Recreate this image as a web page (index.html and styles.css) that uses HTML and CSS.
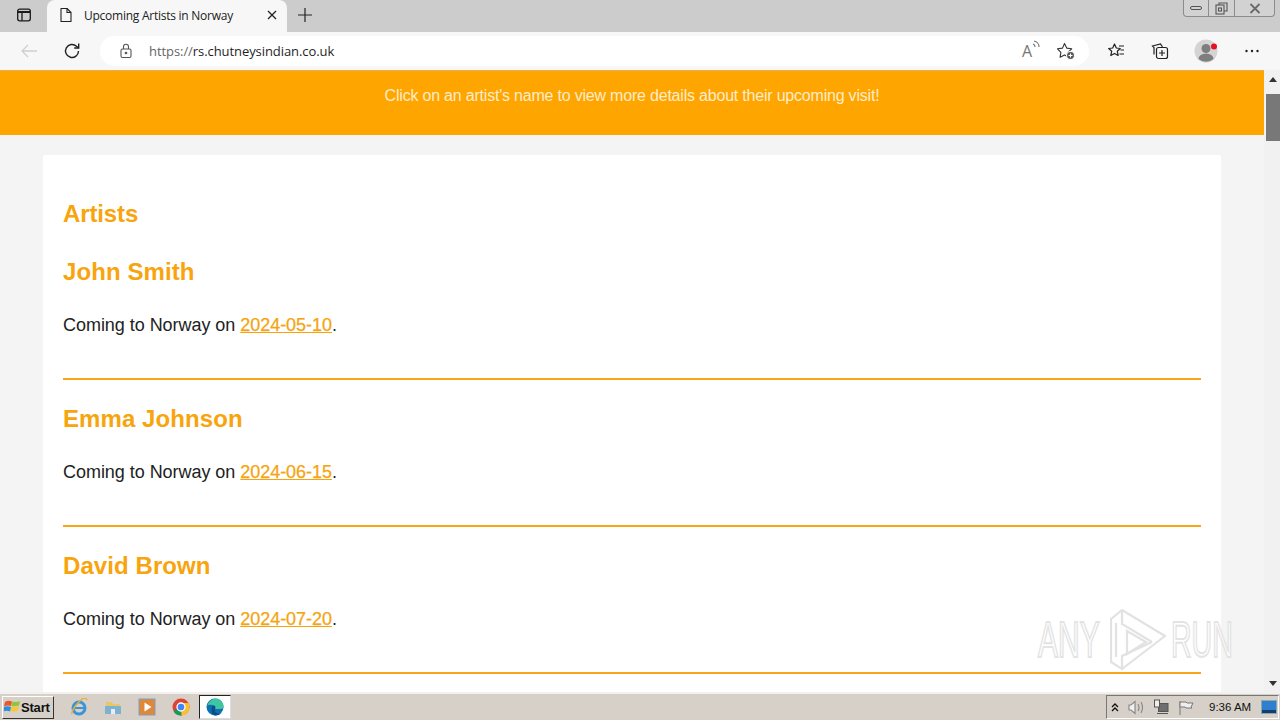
FILE: index.html
```html
<!DOCTYPE html>
<html lang="en">
<head>
<meta charset="utf-8">
<title>Upcoming Artists in Norway</title>
<link rel="stylesheet" href="styles.css">
</head>
<body>
<div class="screen">
  <div class="tabstrip">
    <div class="tab-actions">
      <svg width="16" height="16" viewBox="0 0 16 16" fill="none" stroke="#1a1a1a" stroke-width="1.3"><rect x="1.700" y="2.200" width="12.600" height="11.600" rx="2"/><path d="M1.700 5h12.600" stroke-width="2"/><path d="M6 5v8.800"/></svg>
    </div>
    <div class="tab">
      <svg width="14" height="16" viewBox="0 0 14 16" fill="none" stroke="#222" stroke-width="1.100"><path d="M2 1.500h6l4 4v9H2z" stroke-linejoin="round"/><path d="M8 1.500v4h4"/></svg>
      <span class="tab-title">Upcoming Artists in Norway</span>
      <svg class="tab-close" width="10" height="10" viewBox="0 0 10 10" stroke="#222" stroke-width="1.300"><path d="M1 1l8 8M9 1l-8 8"/></svg>
    </div>
    <svg class="new-tab" width="16" height="16" viewBox="0 0 16 16" stroke="#222" stroke-width="1.200"><path d="M8 1v14M1 8h14"/></svg>
    <div class="win-controls">
      <div class="win-btn win-min"><svg width="12" height="8" viewBox="0 0 12 8" fill="none" stroke="#555"><rect x="0.500" y="2.500" width="11" height="3" rx="1.500"/></svg></div>
      <div class="win-btn win-max"><svg width="13" height="13" viewBox="0 0 13 13" fill="none" stroke="#555" stroke-width="1.100"><rect x="1" y="3" width="8" height="9"/><path d="M4 3V1h8v8h-3"/><rect x="3.500" y="6" width="3" height="3"/></svg></div>
      <div class="win-btn win-close"><svg width="12" height="11" viewBox="0 0 12 11" stroke="#6a6a6a" stroke-width="1.800"><path d="M1.500 1l9 9M10.500 1l-9 9"/></svg></div>
    </div>
  </div>
  <div class="toolbar">
    <svg class="tool-back" width="18" height="16" viewBox="0 0 18 16" fill="none" stroke="#cfcfcf" stroke-width="1.300"><path d="M17 8H2M8 2L2 8l6 6"/></svg>
    <svg class="tool-reload" width="18" height="18" viewBox="0 0 18 18" fill="none" stroke="#222" stroke-width="1.400"><path d="M15.500 9a6.500 6.500 0 1 1-2-4.700L15.500 6"/><path d="M15.700 1.500V6h-4.500"/></svg>
    <div class="address">
      <svg width="14" height="16" viewBox="0 0 14 16" fill="none" stroke="#555" stroke-width="1.100"><rect x="2" y="6" width="10" height="8.500" rx="1.500"/><path d="M4.500 6V3.800a2.500 2.500 0 0 1 5 0V6"/><circle cx="7" cy="10" r=".8" fill="#555"/></svg>
      <span class="url"><span class="url-scheme">https://</span>rs.chutneysindian.co.uk</span>
      <span class="address-end">
        <span class="read-aloud">A<svg width="8" height="9" viewBox="0 0 8 9" fill="none" stroke="#777" stroke-width="1.200"><path d="M1 4a3 3 0 0 1 2 3M2 1a6 6 0 0 1 5 6"/></svg></span>
        <svg width="20" height="19" viewBox="0 0 20 19" fill="none" stroke="#333" stroke-width="1.100"><path d="M8.500 1.500l2.200 4.600 5 .7-3.600 3.500.8 4.900-4.400-2.300-4.400 2.300.8-4.900L1.500 6.800l5-.7z" stroke-linejoin="round"/><circle cx="14.500" cy="13.500" r="4" fill="#555" stroke="#fff"/><path d="M14.500 11.500v4M12.500 13.500h4" stroke="#fff"/></svg>
      </span>
    </div>
    <div class="tool-icons">
      <svg width="18" height="18" viewBox="0 0 18 18" fill="none" stroke="#222" stroke-width="1.200"><path d="M7.500 2l1.800 4 4 .5-3 2.800.9 4.200-3.700-2.100-3.700 2.100.9-4.200-3-2.800 4-.5z" stroke-linejoin="round"/><path d="M12 4h5M13.500 8h3.500M12.500 12H17"/></svg>
      <svg width="18" height="18" viewBox="0 0 18 18" fill="none" stroke="#222" stroke-width="1.200"><path d="M3 12.500V5.500L1.500 4l8-2 2 3"/><rect x="5.500" y="5.500" width="11" height="11" rx="2"/><path d="M11 8v6M8 11h6"/></svg>
      <span class="avatar"><svg width="24" height="24" viewBox="0 0 24 24"><circle cx="12" cy="12" r="11.500" fill="#d4d4d4"/><circle cx="12" cy="9.500" r="4.500" fill="#7e7e7e"/><path d="M4.500 20a7.500 5.500 0 0 1 15 0 11.500 11.500 0 0 1-15 0z" fill="#7e7e7e"/><circle cx="20" cy="7.500" r="3" fill="#e81123"/></svg></span>
      <svg width="16" height="16" viewBox="0 0 16 16" fill="#222"><circle cx="2.500" cy="8" r="1.200"/><circle cx="8" cy="8" r="1.200"/><circle cx="13.500" cy="8" r="1.200"/></svg>
    </div>
  </div>
  <div class="viewport">
    <div class="page">
      <header class="banner"><p>Click on an artist's name to view more details about their upcoming visit!</p></header>
      <main class="card">
        <h2>Artists</h2>
        <article class="artist">
          <h3>John Smith</h3>
          <p>Coming to Norway on <a href="#">2024-05-10</a>.</p>
        </article>
        <hr>
        <article class="artist">
          <h3>Emma Johnson</h3>
          <p>Coming to Norway on <a href="#">2024-06-15</a>.</p>
        </article>
        <hr>
        <article class="artist">
          <h3>David Brown</h3>
          <p>Coming to Norway on <a href="#">2024-07-20</a>.</p>
        </article>
        <hr>
      </main>
    </div>
    <div class="scrollbar">
      <span class="arrow-up"></span>
      <span class="thumb"></span>
      <span class="arrow-down"></span>
    </div>
    <div class="watermark">
      <span class="wm-any">ANY</span>
      <svg width="56" height="62" viewBox="0 0 56 62" fill="none" stroke="#e2e2e2" stroke-width="2.200"><path d="M1 10L12 1l43 26-43 33L1 53z"/><path d="M6 14v34M17 22l19 11-19 12z"/><path d="M12 1v14l30 18M12 60V47l30-14"/></svg>
      <span class="wm-run">RUN</span>
    </div>
  </div>
  <div class="taskbar">
    <div class="start">
      <svg width="17" height="16" viewBox="0 0 17 16"><path d="M1 3q3-2 7-.5L7 7Q3.500 6 0 7.500z" fill="#e8562a"/><path d="M8.500 2.500q3 1 7.500-.3L15 6.500q-4 1.200-7.500.5z" fill="#8cc63f"/><path d="M0 8q3.500-1.500 7 0L6 12.500Q3 11-1 12.500z" fill="#2a8fe0"/><path d="M7.500 7.500q3.500 1 7.500-.3L14 11.500q-4 1.500-7.500.5z" fill="#fdc62f"/></svg>
      <span>Start</span>
    </div>
    <div class="quick">
      <svg width="18" height="18" viewBox="0 0 18 18" fill="none"><circle cx="9" cy="10" r="6" stroke="#3b94d9" stroke-width="3"/><path d="M4 10h10" stroke="#3b94d9" stroke-width="2"/><path d="M2 16Q1 13 8 5t9-3" stroke="#e3b23c" stroke-width="1.500"/></svg>
      <svg width="18" height="18" viewBox="0 0 18 18"><path d="M2 4h6l1 2h7v3H2z" fill="#e8c769"/><path d="M1 8h16v8H1z" fill="#7fb2cf"/><path d="M7 11h4v5H7z" fill="#e6eef3"/></svg>
      <svg width="18" height="18" viewBox="0 0 18 18"><rect x="1" y="1" width="16" height="16" fill="#e0883a" stroke="#7da0bf"/><path d="M6.500 4.500l7 4.500-7 4.500z" fill="#fff"/></svg>
      <svg width="18" height="18" viewBox="0 0 18 18"><circle cx="9" cy="9" r="8.500" fill="#db4437"/><path d="M9 9L1.600 13.200A8.500 8.500 0 0 0 9.500 17.500z" fill="#0f9d58"/><path d="M9 5h7.500a8.500 8.500 0 0 1-7 12.500z" fill="#fbc02d"/><circle cx="9" cy="9" r="4" fill="#4285f4" stroke="#fff" stroke-width="1.300"/></svg>
      <div class="task-active">
        <svg width="18" height="18" viewBox="0 0 18 18"><circle cx="9" cy="9" r="8.500" fill="#0c6fb0"/><path d="M1 8q3-7.500 9-7.500t7.500 7q.5 3.500-3 3.500H8q2-3-1-4-4-1-6 1z" fill="#3fc6a0"/><path d="M6 9q1.500-2 3-1 1 1 0 3.500t3 4q2 .5 4-1-3 3.500-7 3-5-1-3-8.500z" fill="#0a4e8c"/></svg>
      </div>
    </div>
    <div class="tray">
      <svg width="8" height="9" viewBox="0 0 8 9" fill="none" stroke="#111" stroke-width="1.300"><path d="M1 4l3-3 3 3M1 8l3-3 3 3"/></svg>
      <svg width="16" height="15" viewBox="0 0 16 15" fill="none" stroke="#8a8a8a" stroke-width="1.200"><path d="M1 5h2l4-3.500v12L3 10H1z" fill="#f2f2f2"/><path d="M10 4q2 3.500 0 7M13 2q3 5.500 0 11"/></svg>
      <svg width="16" height="16" viewBox="0 0 16 16" fill="none" stroke="#555"><rect x="5.500" y="4.500" width="9.500" height="8" fill="#6e6e6e"/><rect x="1.500" y="1" width="5" height="7" fill="#eee"/><path d="M4 14.500h11"/></svg>
      <svg width="16" height="15" viewBox="0 0 16 15" fill="none" stroke="#777"><path d="M2 1v14"/><path d="M2 2h6l1 1h6l-2 4 1 1H8L7 7H2z" fill="#eee"/></svg>
      <span class="clock">9:36 AM</span>
      <svg width="16" height="14" viewBox="0 0 16 14"><rect x=".5" y=".5" width="15" height="13" fill="#2f7fd0" stroke="#8aa"/><rect x="1" y="10" width="14" height="3" fill="#173d6e"/></svg>
    </div>
  </div>
</div>
</body>
</html>
```
FILE: styles.css
```css
* { box-sizing: border-box; }
html, body { margin: 0; height: 100%; overflow: hidden; }
body { font-family: "Liberation Sans", Arial, sans-serif; }

.screen { width: 1280px; height: 720px; display: flex; flex-direction: column; position: relative; overflow: hidden; }

/* browser chrome */
.tabstrip { height: 32px; padding-bottom: 2px; background: #cccccc; display: flex; align-items: center; position: relative; flex: none; }
.tab-actions { width: 47px; padding-left: 16px; display: flex; align-items: center; }
.tab { width: 240px; height: 32px; margin-bottom: -2px; padding-bottom: 2px; background: #f7f7f7; border-radius: 8px 8px 0 0; display: flex; align-items: center; padding-left: 12px; }
.tab-title { font: 12px "Open Sans", sans-serif; color: #222; margin-left: 11px; flex: 1; letter-spacing: -.25px; }
.tab-close { margin-right: 10px; }
.new-tab { margin-left: 10px; }
.win-controls { position: absolute; top: 0; right: 5px; display: flex; height: 17px; border: 1px solid #8c8c8c; border-top: 0; border-radius: 0 0 4px 4px; background: #d2d2d2; }
.win-btn { display: flex; align-items: center; justify-content: center; height: 16px; border-right: 1px solid #8c8c8c; }
.win-min { width: 25px; }
.win-max { width: 26px; }
.win-close { width: 39px; border-right: 0; }

.toolbar { height: 38px; background: #f7f7f7; display: flex; align-items: center; flex: none; }
.tool-back { margin-left: 20px; }
.tool-reload { margin-left: 25px; }
.address { width: 989px; height: 30px; margin-left: 19px; background: #fff; border-radius: 15px; display: flex; align-items: center; padding-left: 19px; padding-right: 13px; }
.url { font: 13px "Open Sans", sans-serif; color: #1f1f1f; margin-left: 16px; letter-spacing: -.07px; }
.url-scheme { color: #666; }
.address-end { margin-left: auto; display: flex; align-items: center; gap: 16px; }
.read-aloud { font: 16px "Open Sans", sans-serif; color: #777; display: flex; align-items: flex-start; }
.tool-icons { display: flex; align-items: center; margin-left: 18px; }
.tool-icons svg:nth-child(2) { margin-left: 26px; }
.avatar { display: flex; margin-left: 25px; margin-right: 26px; }

/* page */
.viewport { flex: 1; min-height: 0; display: flex; position: relative; background: #f4f4f4; }
.page { width: 1264px; height: 622px; overflow: hidden; background: #f4f4f4; border-top: 1px solid #e8b04a; }
.banner { height: 64px; background: #ffa500; color: #ffeccb; text-align: center; padding-top: 16px; }
.banner p { margin: 0; font-size: 16px; font-weight: 300; line-height: 18px; letter-spacing: -.205px; }
.card { margin: 20px 43px 0 43px; padding: 20px; background: #fff; }
.card h2 { margin: 25px 0 0; font-size: 24px; line-height: 28px; color: #f8a40c; letter-spacing: -.12px; }
.artist h3 { margin: 30px 0 0; font-size: 24px; line-height: 28px; color: #f8a40c; letter-spacing: .08px; }
.artist p { margin: 29px 0 0; font-size: 18px; line-height: 20px; color: #222; letter-spacing: -.04px; }
.artist a { color: #f5a40f; -webkit-text-stroke: .25px #f5a40f; }
hr { height: 2px; margin: 43px 0 0; border: 0; background: #f8a51a; }
hr + .artist h3 { margin-top: 25px; }

.scrollbar { width: 16px; background: #f1f1f1; display: flex; flex-direction: column; align-items: center; position: relative; flex: none; padding-left: 1px; }
.arrow-up { margin-top: 7px; border: 4px solid transparent; border-top: 0; border-bottom: 5px solid #333; }
.thumb { width: 14px; height: 47px; margin-top: 12px; background: #787878; }
.arrow-down { margin-top: auto; margin-bottom: 6px; border: 4px solid transparent; border-bottom: 0; border-top: 5px solid #333; }

.watermark { position: absolute; left: 1038px; top: 539px; display: flex; align-items: center; font-size: 50px; color: rgba(255,255,255,.6); -webkit-text-stroke: 2px #e3e3e3; }
.watermark span { display: block; width: 62px; white-space: nowrap; transform-origin: left center; }
.wm-any { transform: scaleX(.6); margin-right: 10px; }
.wm-run { transform: scaleX(.57); margin-left: 5px; }

/* taskbar */
.taskbar { height: 28px; flex: none; background: #d6d0c8; border-top: 2px solid #f3f1ee; display: flex; align-items: center; position: relative; }
.start { width: 52px; height: 23px; margin-left: 2px; background: #d6d0c8; border: 1px solid; border-color: #fff #333 #333 #fff; display: flex; align-items: center; padding-left: 1px; font-size: 13px; font-weight: bold; color: #111; letter-spacing: -.2px; }
.quick { display: flex; align-items: center; gap: 16px; margin-left: 16px; }
.task-active { width: 32px; height: 24px; margin-left: -7px; background: #fff; border: 1px solid; border-color: #222 #ddd #ddd #222; display: flex; align-items: center; justify-content: center; }
.tray { margin-left: auto; width: 173px; height: 24px; margin-right: 1px; border: 1px solid; border-color: #777 #fff #fff #777; display: flex; align-items: center; gap: 9px; padding-left: 4px; }
.clock { font: 11.500px "Liberation Sans", sans-serif; color: #111; margin-left: 6px; margin-right: 1px; white-space: nowrap; }
```
